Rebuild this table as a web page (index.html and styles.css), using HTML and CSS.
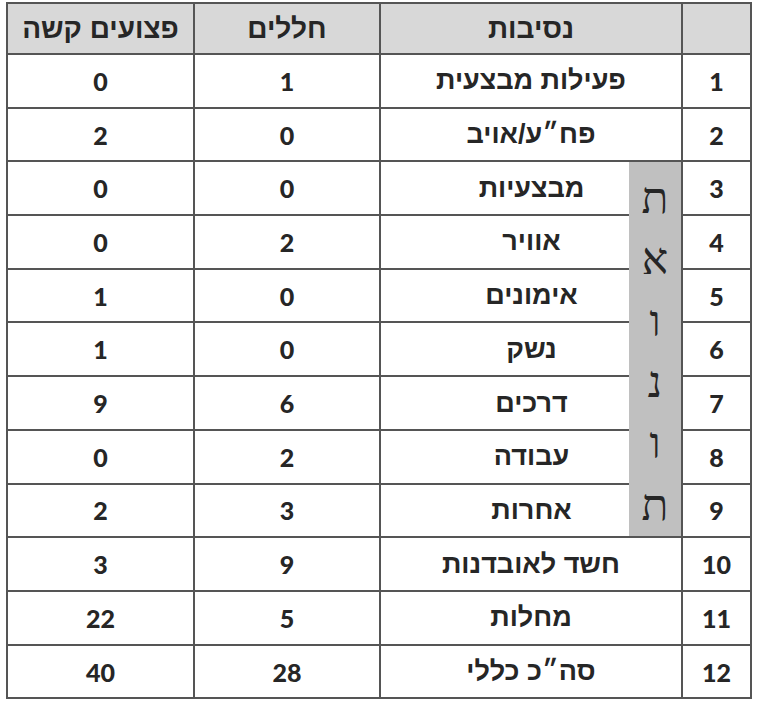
FILE: index.html
```html
<!DOCTYPE html>
<html lang="he" dir="rtl">
<head>
<meta charset="utf-8">
<link rel="stylesheet" href="styles.css">
</head>
<body>
<div class="page">
<table class="stats">
  <colgroup>
    <col class="c-num">
    <col class="c-side">
    <col class="c-cause">
    <col class="c-dead">
    <col class="c-hurt">
  </colgroup>
  <thead>
    <tr>
      <th></th>
      <th colspan="2">נסיבות</th>
      <th>חללים</th>
      <th>פצועים קשה</th>
    </tr>
  </thead>
  <tbody>
    <tr><td class="num">1</td><td colspan="2">פעילות מבצעית</td><td class="num">1</td><td class="num">0</td></tr>
    <tr><td class="num">2</td><td colspan="2">פח״ע/אויב</td><td class="num">0</td><td class="num">2</td></tr>
    <tr><td class="num">3</td>
      <td class="band" rowspan="7"><div class="band-letters"><span>ת</span><span>א</span><span>ו</span><span>נ</span><span>ו</span><span>ת</span></div></td>
      <td class="inner">מבצעיות</td>
      <td class="num">0</td><td class="num">0</td></tr>
    <tr><td class="num">4</td><td class="inner">אוויר</td><td class="num">2</td><td class="num">0</td></tr>
    <tr><td class="num">5</td><td class="inner">אימונים</td><td class="num">0</td><td class="num">1</td></tr>
    <tr><td class="num">6</td><td class="inner">נשק</td><td class="num">0</td><td class="num">1</td></tr>
    <tr><td class="num">7</td><td class="inner">דרכים</td><td class="num">6</td><td class="num">9</td></tr>
    <tr><td class="num">8</td><td class="inner">עבודה</td><td class="num">2</td><td class="num">0</td></tr>
    <tr><td class="num">9</td><td class="inner">אחרות</td><td class="num">3</td><td class="num">2</td></tr>
    <tr><td class="num">10</td><td colspan="2">חשד לאובדנות</td><td class="num">9</td><td class="num">3</td></tr>
    <tr><td class="num">11</td><td colspan="2">מחלות</td><td class="num">5</td><td class="num">22</td></tr>
    <tr><td class="num">12</td><td colspan="2">סה״כ כללי</td><td class="num">28</td><td class="num">40</td></tr>
  </tbody>
</table>
</div>
</body>
</html>
```

FILE: styles.css
```css
html, body {
  margin: 0;
  padding: 0;
  background: #ffffff;
}

.page {
  padding: 2px 0 0 6px;
  direction: ltr;
}

.stats {
  direction: rtl;
  border-collapse: collapse;
  table-layout: fixed;
  width: 746px;
  font-family: "Liberation Sans", "DejaVu Sans", sans-serif;
  color: #262626;
}

.c-num { width: 69px; }
.c-side { width: 53px; }
.c-cause { width: 249px; }
.c-dead { width: 186px; }
.c-hurt { width: 187px; }

.stats th,
.stats td {
  border: 2px solid #555555;
  text-align: center;
  padding: 0;
  height: 51.7px;
}

.stats th {
  background: #d8d8d8;
  font-weight: bold;
  font-size: 28px;
  height: 49px;
}

.stats td {
  font-weight: bold;
  font-size: 27px;
}

.stats td.num {
  font-family: Lato, "Open Sans", sans-serif;
  font-weight: 900;
  font-size: 25px;
}

.stats td.inner {
  border-right-style: hidden;
  padding-left: 53px;
}

.stats td.band {
  background: #c0c0c0;
  border-left-style: hidden;
  padding: 0;
  vertical-align: top;
}

.band-letters {
  display: flex;
  flex-direction: column;
  align-items: center;
  justify-content: space-around;
  height: 374px;
  font-family: "Liberation Serif", "DejaVu Serif", serif;
  font-weight: normal;
  font-size: 44px;
  color: #262626;
  line-height: 1;
  padding-top: 6px;
  box-sizing: border-box;
}
```
